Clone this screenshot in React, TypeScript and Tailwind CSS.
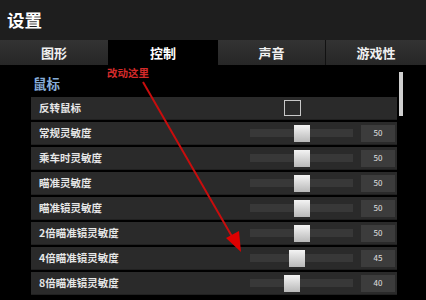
import React from 'react'

type Row = { label: string; kind: 'check' | 'slider'; value?: number }

const ROWS: Row[] = [
  { label: '反转鼠标', kind: 'check' },
  { label: '常规灵敏度', kind: 'slider', value: 50 },
  { label: '乘车时灵敏度', kind: 'slider', value: 50 },
  { label: '瞄准灵敏度', kind: 'slider', value: 50 },
  { label: '瞄准镜灵敏度', kind: 'slider', value: 50 },
  { label: '2倍瞄准镜灵敏度', kind: 'slider', value: 50 },
  { label: '4倍瞄准镜灵敏度', kind: 'slider', value: 45 },
  { label: '8倍瞄准镜灵敏度', kind: 'slider', value: 40 },
]

const font = { fontFamily: '"Noto Sans CJK SC", "Noto Sans", sans-serif' }

const SettingRow: React.FC<{ row: Row }> = ({ row }) => (
  <div className="flex h-[23px] items-center bg-[#2a2a2a] border-b border-[#202020]">
    <span className="w-[209px] pl-[8px] text-[10.5px] font-bold text-[#e6e6e6] leading-none">{row.label}</span>
    {row.kind === 'check' ? (
      <div className="ml-[44px] h-[16px] w-[17px] border border-[#c8c8c8]" />
    ) : (
      <div className="flex items-center">
        {/* track */}
        <div className="relative ml-[10px] h-[8px] w-[103px] bg-[#383838]">
          <div
            className="absolute top-[-4px] h-[17px] w-[16px] bg-gradient-to-b from-[#f4f4f4] to-[#b8b8b8]"
            style={{ left: (row.value ?? 0) - 6 }}
          />
        </div>
        <div className="ml-[8px] flex h-[17px] w-[34px] items-center justify-center bg-[#3c3c3c] text-[8px] text-[#e0e0e0]">
          {row.value}
        </div>
      </div>
    )}
  </div>
)

const tabBase = 'flex items-center justify-center text-[13px] font-bold text-[#f0f0f0]'
const tabIdle = 'bg-gradient-to-b from-[#333333] to-[#262626]'

export default function App() {
  return (
    <div className="relative h-[300px] w-[426px] overflow-hidden bg-black select-none" style={font}>
      {/* Title */}
      <div className="flex h-[40px] items-center bg-[#1e1e1e] pl-[7px]">
        <h1 className="text-[17.5px] font-bold text-white leading-none">设置</h1>
      </div>

      {/* Tabs */}
      <div className="flex h-[25px]">
        <div className={`${tabBase} ${tabIdle} w-[108px]`}>图形</div>
        <div className={`${tabBase} w-[110px] bg-black text-white`}>控制</div>
        <div className={`${tabBase} ${tabIdle} w-[108px] border-r border-[#111111]`}>声音</div>
        <div className={`${tabBase} ${tabIdle} flex-1`}>游戏性</div>
      </div>

      {/* Content */}
      <div className="flex pl-[31px]">
        <div className="w-[366px]">
          <div className="flex h-[32px] items-center pl-[2px] pt-[6px]">
            <span className="text-[13.5px] font-bold text-[#86acd8] leading-none">鼠标</span>
          </div>
          <div className="flex flex-col gap-[2px]">
            {ROWS.map((r, idx) => (
              <SettingRow key={idx} row={r} />
            ))}
          </div>
        </div>
        {/* scrollbar */}
        <div className="ml-[2px] w-[4px]">
          <div className="mt-[7px] h-[44px] w-[4px] bg-[#cfcfcf]" />
        </div>
      </div>

      {/* annotation */}
      <span className="absolute left-[107px] top-[68px] text-[10.5px] font-bold text-[#d42a2a] leading-none">改动这里</span>
      <svg className="pointer-events-none absolute left-0 top-0" width="426" height="300">
        <line x1="143" y1="82" x2="234" y2="240" stroke="#c80d0d" strokeWidth="2" />
        <polygon points="241,252 226,238 239,231" fill="#e00000" />
      </svg>
    </div>
  )
}
